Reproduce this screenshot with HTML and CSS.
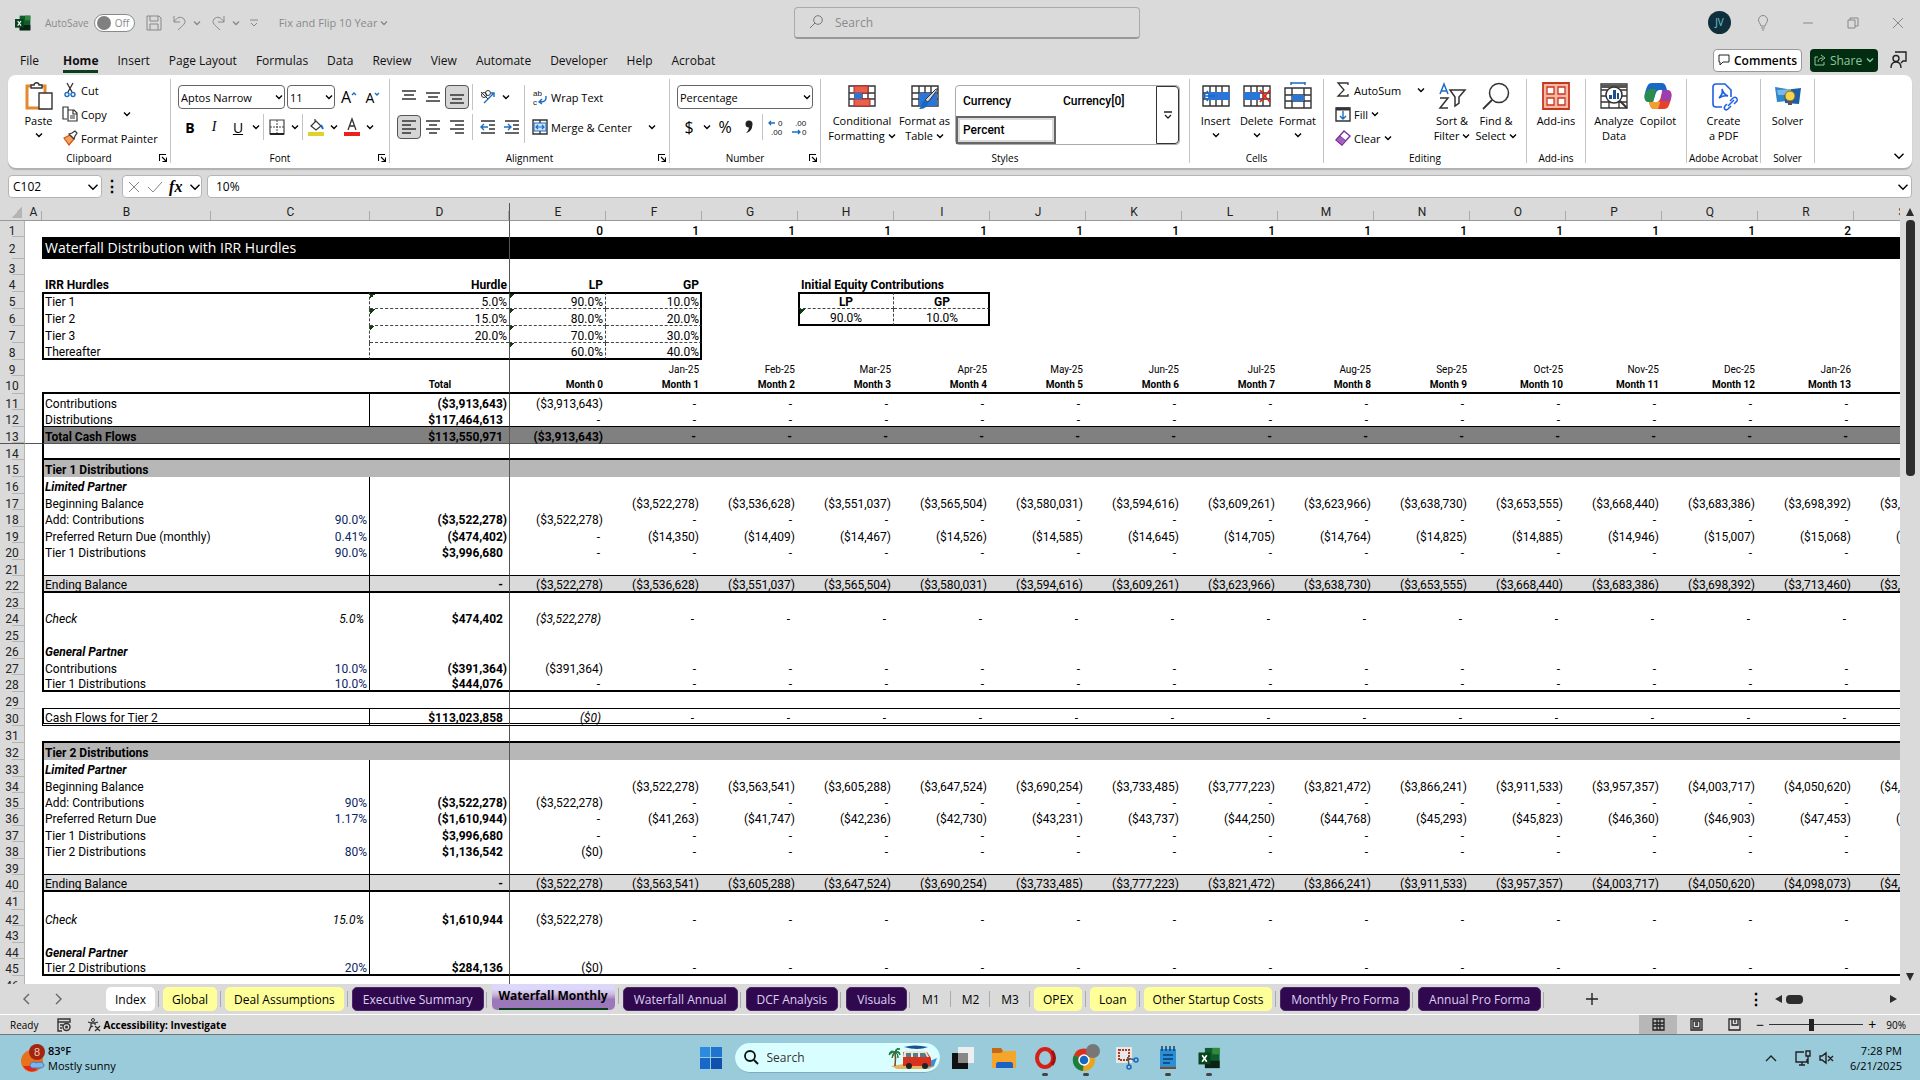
FILE: index.html
```html
<!DOCTYPE html>
<html lang="en">

<head>
  <meta charset="UTF-8" />
  <meta name="viewport" content="width=device-width, initial-scale=1.0" />
  <title>Fix and Flip 10 Year - Excel</title>
  <link rel="stylesheet" href="styles.css">
</head>

<body>
  <svg class="sprite" aria-hidden="true">
    <symbol id="chev" viewBox="0 0 8 8"><path d="M1 2.5l3 3 3-3" fill="none" stroke="currentColor" stroke-width="1.4" vector-effect="non-scaling-stroke" /></symbol>
    <symbol id="launch" viewBox="0 0 8 8"><path d="M.5 7V.5H7M3 3l4 4M7.5 3.5v4h-4" fill="none" stroke="currentColor" stroke-width="1.1" /></symbol>
    <symbol id="excel" viewBox="0 0 24 24">
      <path d="M7 1h16v22H7z" fill="#0f5c2c" /><path d="M15 1h8v7h-8z" fill="#2f8a3c" /><path d="M7 15h16v8H7z" fill="#0a2312" />
      <path d="M0 6h13v13H0z" fill="#07441d" /><path d="M4 9l5 7M9 9l-5 7" stroke="#fff" stroke-width="1.8" />
    </symbol>
    <symbol id="grid" viewBox="0 0 28 28"><path d="M1 4h26v20H1zM1 11h26M1 17h26M8 4v20M14 4v20M20 4v20" fill="#fff" stroke="#333" stroke-width="1.4" /></symbol>
  </svg>

  <header class="titlebar">
    <div class="title-left">
      <svg class="app-icon"><use href="#excel" /></svg>
      <label class="autosave" for="autosave">AutoSave</label>
      <span class="toggle"><input type="checkbox" id="autosave" /><span>Off</span></span>
      <button class="qat" aria-label="Save"><svg width="16" height="16" viewBox="0 0 16 16"><path d="M1 1h12l2 2v12H1zM4 1v5h8V1M4 15V9h8v6" /></svg></button>
      <button class="qat undo" aria-label="Undo"><svg width="15" height="16" viewBox="0 0 15 16"><path d="M2 1v6h6M2 7c3-5 7-6 10-3 3 4-1 6-6 11" /></svg><svg class="chev"><use href="#chev" /></svg></button>
      <button class="qat redo" aria-label="Redo"><svg width="15" height="16" viewBox="0 0 15 16"><path d="M13 1v6H7M13 7C10 2 6 1 3 4c-3 4 1 6 6 11" /></svg><svg class="chev"><use href="#chev" /></svg></button>
      <button class="qat more" aria-label="Customize"><svg width="8" height="8" viewBox="0 0 8 8"><path d="M0 1h8M1 4l3 3 3-3" /></svg></button>
      <button class="doc-name">Fix and Flip 10 Year <svg class="chev"><use href="#chev" /></svg></button>
    </div>
    <label class="search">
      <svg width="14" height="14" viewBox="0 0 14 14"><circle cx="9" cy="5" r="4.3" fill="none" stroke="#777" /><path d="M6 8L1 13" stroke="#777" /></svg>
      <input type="text" placeholder="Search" aria-label="Search" />
    </label>
    <div class="title-right">
      <span class="avatar">JV</span>
      <button aria-label="Tips"><svg width="12" height="16" viewBox="0 0 12 16"><path d="M4 11C3 8 1.500 7 1.500 5a4.500 4.500 0 0 1 9 0C10.500 7 9 8 8 11zM4 13h4M5 15h2" /></svg></button>
      <button aria-label="Minimize"><svg width="12" height="16" viewBox="0 0 12 16"><path d="M1 8h10" /></svg></button>
      <button aria-label="Restore"><svg width="12" height="16" viewBox="0 0 12 16"><path d="M1 5h7v8H1zM3 5V3h8v8H8" /></svg></button>
      <button aria-label="Close"><svg width="12" height="16" viewBox="0 0 12 16"><path d="M1 3l10 10M11 3L1 13" /></svg></button>
    </div>
  </header>

  <nav class="menu">
    <a href="#" class="file">File</a>
    <a href="#" class="active">Home</a>
    <a href="#">Insert</a>
    <a href="#">Page Layout</a>
    <a href="#">Formulas</a>
    <a href="#">Data</a>
    <a href="#">Review</a>
    <a href="#">View</a>
    <a href="#">Automate</a>
    <a href="#">Developer</a>
    <a href="#">Help</a>
    <a href="#">Acrobat</a>
    <span class="spacer"></span>
    <button class="comments"><svg width="12" height="12" viewBox="0 0 12 12"><path d="M1 1h10v7H5l-3 3V8H1z" fill="none" stroke="#222" /></svg>Comments</button>
    <button class="share"><svg width="12" height="12" viewBox="0 0 12 12"><path d="M4 3H1v8h9V8M4 8c0-3 2-4 5-4M7 1l4 3-4 3" fill="none" stroke="#8fc7a0" /></svg>Share<svg class="chev"><use href="#chev" /></svg></button>
    <button class="presence" aria-label="Catch up"><svg width="18" height="18" viewBox="0 0 18 18"><path d="M5 1h11v9h-3l-2 2M1 17c0-4 2-6 5-6s5 2 5 6" fill="none" stroke="#222" stroke-width="1.4" /><circle cx="6" cy="7.500" r="3" fill="#dadada" stroke="#222" stroke-width="1.4" /></svg></button>
  </nav>

  <section class="ribbon">
    <div class="group g-clipboard">
      <div class="group-body">
        <button class="big w40">
          <svg viewBox="0 0 28 28"><path d="M2 4h18v22H2z" fill="#fff" stroke="#e58a2c" stroke-width="3" /><path d="M6 6V3h3c0-3 5-3 5 0h3v3z" fill="#fff" stroke="#333" stroke-width="1.400" /><path d="M14 11h13v16H14z" fill="#fff" stroke="#333" stroke-width="1.400" /></svg>
          Paste<svg class="chev"><use href="#chev" /></svg>
        </button>
        <div class="stack">
          <button class="small"><svg viewBox="0 0 16 16"><path d="M5 1l5 9M11 1L6 10" stroke="#333" stroke-width="1.3" /><circle cx="5" cy="12.500" r="2" fill="none" stroke="#1b6ec2" stroke-width="1.4" /><circle cx="11" cy="12.500" r="2" fill="none" stroke="#1b6ec2" stroke-width="1.4" /></svg>Cut</button>
          <button class="small"><svg viewBox="0 0 16 16"><path d="M6 4V1H1v12h4M6 4h6l3 3v8H6zM11 4v4h4M8 10h5M8 12h5" fill="none" stroke="#333" stroke-width="1.2" /></svg>Copy<svg class="chev gap-left"><use href="#chev" /></svg></button>
          <button class="small"><svg viewBox="0 0 16 16"><path d="M2 8l6-3 4 4-5 6z" fill="#f3a25a" stroke="#d2521a" stroke-width="1.2" /><path d="M7 4l5 5 1-3 2-3-2-2-3 2z" fill="#fff" stroke="#333" stroke-width="1.2" /></svg>Format Painter</button>
        </div>
      </div>
      <div class="group-label"><span>Clipboard</span><svg class="launch"><use href="#launch" /></svg></div>
    </div>

    <div class="group g-font">
      <div class="tools">
        <div class="tool-row">
          <span class="select font-name"><select aria-label="Font"><option>Aptos Narrow</option></select><svg class="chev"><use href="#chev" /></svg></span>
          <span class="select font-size"><select aria-label="Font size"><option>11</option></select><svg class="chev"><use href="#chev" /></svg></span>
          <button class="tool letter big-a" aria-label="Grow font">A<svg class="mark" viewBox="0 0 6 12"><path d="M1 4l2-2 2 2" /></svg></button>
          <button class="tool letter" aria-label="Shrink font">A<svg class="mark" viewBox="0 0 6 12"><path d="M1 2l2 2 2-2" /></svg></button>
        </div>
        <div class="tool-row">
          <button class="tool letter"><b>B</b></button>
          <button class="tool letter serif"><i>I</i></button>
          <button class="tool letter"><u>U</u></button>
          <svg class="chev"><use href="#chev" /></svg>
          <span class="sep"></span>
          <button class="tool" aria-label="Borders"><svg viewBox="0 0 16 16"><path d="M1 1h14v14H1z" fill="none" stroke="#444" stroke-width="1.200" /><path d="M8 1v14M1 8h14" stroke="#444" stroke-dasharray="2 1" /><path d="M1 15h14" stroke="#222" stroke-width="2" /></svg></button>
          <svg class="chev"><use href="#chev" /></svg>
          <span class="sep"></span>
          <button class="tool" aria-label="Fill color"><svg viewBox="0 0 16 18"><path d="M7 1v3M3 8l5-5 5 5-5 4z" fill="#fff" stroke="#333" stroke-width="1.2" /><path d="M13 7l2 4" stroke="#1b6ec2" stroke-width="2" /><path d="M0 14h16v4H0z" fill="#ddd32a" /></svg></button>
          <svg class="chev"><use href="#chev" /></svg>
          <button class="tool" aria-label="Font color"><svg viewBox="0 0 16 18"><path d="M4 12l4-11 4 11M5 8h6" fill="none" stroke="#333" stroke-width="1.3" /><path d="M0 14h16v4H0z" fill="#e8231a" /></svg></button>
          <svg class="chev"><use href="#chev" /></svg>
        </div>
      </div>
      <div class="group-label"><span>Font</span><svg class="launch"><use href="#launch" /></svg></div>
    </div>

    <div class="group g-align">
      <div class="align-body">
        <div class="tools">
          <div class="tool-row">
            <button class="tool" aria-label="Top align"><svg viewBox="0 0 16 16"><path class="ln" d="M1 2h14M3 6h10M1 10h14" /></svg></button>
            <button class="tool" aria-label="Middle align"><svg viewBox="0 0 16 16"><path class="ln" d="M1 4h14M3 8h10M1 12h14" /></svg></button>
            <button class="tool on" aria-label="Bottom align"><svg viewBox="0 0 16 16"><path class="ln" d="M1 6h14M3 10h10M1 14h14" /></svg></button>
            <span class="sep"></span>
            <button class="tool" aria-label="Orientation"><svg viewBox="0 0 16 16"><circle cx="4" cy="6" r="2.500" fill="none" stroke="#333" /><circle cx="8" cy="4" r="2.500" fill="none" stroke="#333" /><path d="M4 14L14 4M14 8V4h-4" fill="none" stroke="#1b6ec2" stroke-width="1.400" /><path d="M1 3l7 7" stroke="#333" /></svg></button>
            <svg class="chev"><use href="#chev" /></svg>
          </div>
          <div class="tool-row">
            <button class="tool on" aria-label="Align left"><svg viewBox="0 0 16 16"><path class="ln" d="M1 2h14M1 6h9M1 10h14M1 14h9" /></svg></button>
            <button class="tool" aria-label="Center"><svg viewBox="0 0 16 16"><path class="ln" d="M1 2h14M4 6h8M1 10h14M4 14h8" /></svg></button>
            <button class="tool" aria-label="Align right"><svg viewBox="0 0 16 16"><path class="ln" d="M1 2h14M6 6h9M1 10h14M6 14h9" /></svg></button>
            <span class="sep"></span>
            <button class="tool" aria-label="Decrease indent"><svg viewBox="0 0 16 16"><path class="ln" d="M1 2h14M9 6h6M9 10h6M1 14h14" /><path d="M8 8H1M4 5L1 8l3 3" fill="none" stroke="#1b6ec2" stroke-width="1.400" /></svg></button>
            <button class="tool" aria-label="Increase indent"><svg viewBox="0 0 16 16"><path class="ln" d="M1 2h14M9 6h6M9 10h6M1 14h14" /><path d="M0 8h7M4 5l3 3-3 3" fill="none" stroke="#1b6ec2" stroke-width="1.400" /></svg></button>
          </div>
        </div>
        <span class="sep tall"></span>
        <div class="tools wrap-tools">
          <button class="small"><svg viewBox="0 0 16 16"><text x="1" y="7">ab</text><text x="1" y="16">c</text><path d="M14 7v2c0 3-3 4-6 4M10 10l-3 3 3 2" fill="none" stroke="#1b6ec2" stroke-width="1.400" /></svg>Wrap Text</button>
          <button class="small merge"><svg viewBox="0 0 16 16"><path d="M1 1h14v14H1zM8 1v3M8 12v3" fill="none" stroke="#333" stroke-width="1.400" /><path d="M2 4h12v8H2z" fill="#cfe2f7" stroke="#1b6ec2" /><path d="M4 8h8M6 6L4 8l2 2M10 6l2 2-2 2" fill="none" stroke="#1b6ec2" stroke-width="1.200" /></svg>Merge &amp; Center<svg class="chev gap-left"><use href="#chev" /></svg></button>
        </div>
      </div>
      <div class="group-label"><span>Alignment</span><svg class="launch"><use href="#launch" /></svg></div>
    </div>

    <div class="group g-number">
      <div class="tools">
        <div class="tool-row">
          <span class="select number-format"><select aria-label="Number format"><option>Percentage</option></select><svg class="chev"><use href="#chev" /></svg></span>
        </div>
        <div class="tool-row">
          <button class="tool letter sign">$</button>
          <svg class="chev"><use href="#chev" /></svg>
          <button class="tool letter sign">%</button>
          <button class="tool letter" aria-label="Comma style"><svg viewBox="0 0 16 16"><circle cx="8" cy="5" r="3.500" fill="#222" /><path d="M11 5c1 5-2 8-6 9 2-2 3-4 3-6z" fill="#222" /></svg></button>
          <span class="sep"></span>
          <button class="tool" aria-label="Increase decimal"><svg viewBox="0 0 16 16"><path d="M7 4H1M3 2L1 4l2 2" fill="none" stroke="#1b6ec2" stroke-width="1.3" /><text x="10" y="7">0</text><text x="3" y="16">.00</text></svg></button>
          <button class="tool" aria-label="Decrease decimal"><svg viewBox="0 0 16 16"><path d="M0 13h8M6 11l2 2-2 2" fill="none" stroke="#1b6ec2" stroke-width="1.3" /><text x="3" y="7">.00</text><text x="10" y="16">0</text></svg></button>
        </div>
      </div>
      <div class="group-label"><span>Number</span><svg class="launch"><use href="#launch" /></svg></div>
    </div>

    <div class="group g-styles">
      <div class="group-body">
        <button class="big w64">
          <svg viewBox="0 0 28 28"><use href="#grid" /><path d="M6 4h14v7H6zM6 17h16v7H6z" fill="#e9604f" stroke="#b52a1c" /><path d="M6 11h8v6H6z" fill="#2b74d8" /></svg>
          Conditional<span>Formatting <svg class="chev"><use href="#chev" /></svg></span>
        </button>
        <button class="big w60">
          <svg viewBox="0 0 28 28"><use href="#grid" /><path d="M8 11h18v13H8z" fill="#2b74d8" /><path d="M27 7L17 20l-3-2L25 7z" fill="#cfd8e3" stroke="#333" /><path d="M14 18l3 3c-1 5-5 6-9 6 3-2 2-7 6-9z" fill="#1767c4" /></svg>
          Format as<span>Table <svg class="chev"><use href="#chev" /></svg></span>
        </button>
        <div class="gallery">
          <div class="gallery-list">
            <button>Currency</button>
            <button>Currency[0]</button>
            <button class="picked">Percent</button>
          </div>
          <button class="gallery-more" aria-label="More styles"><svg width="8" height="8" viewBox="0 0 8 8"><path d="M0 1h8M1 4l3 3 3-3" fill="none" stroke="#222" stroke-width="1.300" /></svg></button>
        </div>
      </div>
      <div class="group-label"><span>Styles</span></div>
    </div>

    <div class="group g-cells">
      <div class="group-body">
        <button class="big w40"><svg viewBox="0 0 28 28"><use href="#grid" /><path d="M6 10h22v8H6z" fill="#2b74d8" /><path d="M13 14H1M6 9l-5 5 5 5" fill="none" stroke="#1767c4" stroke-width="1.600" /></svg>Insert<svg class="chev"><use href="#chev" /></svg></button>
        <button class="big w40"><svg viewBox="0 0 28 28"><use href="#grid" /><path d="M1 10h16v8H1z" fill="#2b74d8" /><path d="M17 8l10 12M27 8L17 20" stroke="#e8231a" stroke-width="1.800" /></svg>Delete<svg class="chev"><use href="#chev" /></svg></button>
        <button class="big w40"><svg viewBox="0 0 28 28"><path d="M1 6h26v20H1zM1 13h26M1 19h26M8 6v20M20 6v20" fill="#fff" stroke="#333" stroke-width="1.400" /><path d="M8 13h12v6H8z" fill="#2b74d8" /><path d="M7 1h14M7 0v3M21 0v3" stroke="#1767c4" stroke-width="1.400" /></svg>Format<svg class="chev"><use href="#chev" /></svg></button>
      </div>
      <div class="group-label"><span>Cells</span></div>
    </div>

    <div class="group g-editing">
      <div class="group-body">
        <div class="stack">
          <button class="small"><svg viewBox="0 0 16 16"><path d="M13 3V1H3l6 7-6 6h10v-2" fill="none" stroke="#333" stroke-width="1.300" /></svg>AutoSum<svg class="chev gap-left"><use href="#chev" /></svg></button>
          <button class="small"><svg viewBox="0 0 16 16"><path d="M1 2h14v13H1z" fill="#fff" stroke="#333" stroke-width="1.400" /><path d="M1 3h14" stroke="#333" stroke-width="3" /><path d="M8 5v8M5 10l3 3 3-3" fill="none" stroke="#1b6ec2" stroke-width="1.400" /></svg>Fill<svg class="chev"><use href="#chev" /></svg></button>
          <button class="small"><svg viewBox="0 0 16 16"><path d="M1 10L9 1l6 5-8 9z" fill="#fff" stroke="#7b2f9a" stroke-width="1.400" /><path d="M1 10l4-4 6 5-4 4z" fill="#a45fc0" stroke="#7b2f9a" /></svg>Clear<svg class="chev"><use href="#chev" /></svg></button>
        </div>
        <button class="big w44"><svg viewBox="0 0 28 28"><path d="M2 12L6 2l4 10M3 9h6" fill="none" stroke="#1b6ec2" stroke-width="1.500" /><path d="M2 16h8L2 26h8" fill="none" stroke="#333" stroke-width="1.500" /><path d="M12 8h15l-6 7v6l-4 3v-9z" fill="none" stroke="#333" stroke-width="1.500" /></svg>Sort &amp;<span>Filter <svg class="chev"><use href="#chev" /></svg></span></button>
        <button class="big w44"><svg viewBox="0 0 28 28"><circle cx="17" cy="11" r="9.500" fill="none" stroke="#333" stroke-width="1.500" /><path d="M10 18L1 27" stroke="#333" stroke-width="1.800" /></svg>Find &amp;<span>Select <svg class="chev"><use href="#chev" /></svg></span></button>
      </div>
      <div class="group-label"><span>Editing</span></div>
    </div>

    <div class="group g-addins">
      <div class="group-body center">
        <button class="big w44"><svg viewBox="0 0 28 28"><path d="M1 1h26v26H1z" fill="#f7b7a6" stroke="#c8361c" stroke-width="1.800" /><path d="M5 5h7v7H5zM16 5h7v7h-7zM5 16h7v7H5zM16 16h7v7h-7z" fill="#fff" stroke="#c8361c" stroke-width="1.300" /></svg>Add-ins</button>
      </div>
      <div class="group-label"><span>Add-ins</span></div>
    </div>

    <div class="group g-analyze">
      <div class="group-body center">
        <button class="big w44"><svg viewBox="0 0 28 28"><path d="M1 2h26v24H1zM1 8h26M1 14h26M1 20h26M9 8v18M19 8v18" fill="#fff" stroke="#333" stroke-width="1.300" /><path d="M1 3h26v3H1z" fill="#555" /><circle cx="14" cy="13" r="8" fill="#fff" stroke="#333" stroke-width="1.500" /><path d="M9 13h3v4H9zM13 8h3v9h-3zM17 11h2v6h-2z" fill="#1d4f8c" /><path d="M20 19l7 7" stroke="#333" stroke-width="2" /></svg>Analyze<span>Data</span></button>
        <button class="big w44"><svg viewBox="0 0 28 28"><path d="M8 1h10c3 0 4 3 5 7h-7c-3 0-4 2-5 6l-2 6H5c-5 0-5-5-4-9 2-7 3-10 7-10z" fill="#1767c4" /><path d="M1 12c1-3 3-5 6-5h5l-3 13H5c-4 0-5-4-4-8z" fill="#2c8a4a" /><path d="M20 27H10c-3 0-4-3-5-7h7c3 0 4-2 5-6l2-6h4c5 0 5 5 4 9-2 7-3 10-7 10z" fill="#e8402a" /><path d="M18 8h5c4 0 5 4 4 8l-1 3h-9z" fill="#9b3fb0" /><path d="M5 20h7c3 0 4-1 4 1l-2 6h-4c-3 0-4-3-5-7z" fill="#f0a030" /></svg>Copilot</button>
      </div>
      <div class="group-label"></div>
    </div>

    <div class="group g-adobe">
      <div class="group-body center">
        <button class="big w44"><svg viewBox="0 0 28 28"><path d="M12 25H6c-2 0-3-1-3-3V5c0-2 1-3 3-3h9l6 6v7M9 16c3-3 4-6 3-9 1 4 3 6 6 7-4-1-6 0-9 2z" fill="none" stroke="#1f5fe0" stroke-width="1.600" /><path d="M17 22l-2 2c-2 3 1 5 3 3l3-3M20 19l3-3c3-2 5 1 4 3l-3 3M18 24l6-6" fill="none" stroke="#1f5fe0" stroke-width="1.500" /></svg>Create<span>a PDF</span></button>
      </div>
      <div class="group-label"><span>Adobe Acrobat</span></div>
    </div>

    <div class="group g-solver">
      <div class="group-body center">
        <button class="big w44"><svg viewBox="0 0 28 28"><path d="M1 5l12 2v12l-10 1z" fill="#2f86c8" /><path d="M10 8l17-2-2 16-14-1z" fill="#1a5fa8" /><path d="M3 8l14-1v6H4z" fill="#79b8e6" /><circle cx="16" cy="14" r="5" fill="#f6d451" stroke="#8a6a10" /><path d="M14 19h4v4h-4z" fill="#555" /></svg>Solver</button>
      </div>
      <div class="group-label"><span>Solver</span></div>
    </div>
    <button class="collapse" aria-label="Collapse ribbon"><svg width="12" height="12"><use href="#chev" /></svg></button>
  </section>

  <section class="formula-bar">
    <label class="name-box"><input type="text" value="C102" aria-label="Name box" /><svg class="chev lg"><use href="#chev" /></svg></label>
    <span class="dots">⋮</span>
    <div class="fx">
      <button aria-label="Cancel"><svg width="12" height="12" viewBox="0 0 12 12"><path d="M1 1l10 10M11 1L1 11" fill="none" stroke="#888" /></svg></button>
      <button aria-label="Enter"><svg width="16" height="12" viewBox="0 0 16 12"><path d="M1 6l5 5L15 1" fill="none" stroke="#888" /></svg></button>
      <button class="fx-btn"><i>fx</i></button>
      <svg class="chev lg"><use href="#chev" /></svg>
    </div>
    <label class="formula"><input type="text" value="10%" aria-label="Formula" /><svg class="chev lg"><use href="#chev" /></svg></label>
  </section>

  <main class="sheet">
    <div class="grid-wrap">
      <table class="grid" id="grid-table"></table>
    </div>
    <div class="vscroll">
      <span class="arrow up"></span>
      <span class="thumb"></span>
      <span class="arrow down"></span>
    </div>
  </main>

  <div class="tabs">
    <button class="nav-arrow" aria-label="Previous sheet"><svg width="8" height="12" viewBox="0 0 8 12"><path d="M6 1L1 6l5 5" /></svg></button>
    <button class="nav-arrow" aria-label="Next sheet"><svg width="8" height="12" viewBox="0 0 8 12"><path d="M2 1l5 5-5 5" /></svg></button>
    <div class="tab-list">
      <button class="tab white">Index</button>
      <button class="tab yellow">Global</button>
      <button class="tab yellow">Deal Assumptions</button>
      <button class="tab purple">Executive Summary</button>
      <button class="tab current"><span>Waterfall Monthly</span></button>
      <button class="tab purple">Waterfall Annual</button>
      <button class="tab purple">DCF Analysis</button>
      <button class="tab purple">Visuals</button>
      <button class="tab plain">M1</button>
      <button class="tab plain">M2</button>
      <button class="tab plain">M3</button>
      <button class="tab yellow">OPEX</button>
      <button class="tab yellow">Loan</button>
      <button class="tab yellow">Other Startup Costs</button>
      <button class="tab purple">Monthly Pro Forma</button>
      <button class="tab purple">Annual Pro Forma</button>
    </div>
    <button class="add-sheet" aria-label="New sheet"><svg width="12" height="12" viewBox="0 0 12 12"><path d="M6 0v12M0 6h12" stroke="#222" stroke-width="1.400" /></svg></button>
    <div class="hscroll">
      <span class="dots">⋮</span>
      <span class="arrow left"></span>
      <span class="thumb"></span>
      <span class="arrow right"></span>
    </div>
  </div>

  <footer class="status">
    <span>Ready</span>
    <svg width="14" height="14" viewBox="0 0 14 14"><path d="M1 1h12v3H1zM1 4v9h4M3 7h3M3 10h2" fill="none" stroke="#333" stroke-width="1.400" /><circle cx="9.500" cy="9" r="3.500" fill="#dadada" stroke="#333" stroke-width="1.400" /><circle cx="9.500" cy="9" r="1.500" fill="#333" /></svg>
    <svg class="a11y" width="14" height="14" viewBox="0 0 14 14"><circle cx="6" cy="2" r="1.500" fill="none" stroke="#333" /><path d="M1 4l3 1v3l-2 5M11 4L8 5v2M4 5h4M4 9l2-1M8 8l5 5M13 8l-5 5" fill="none" stroke="#333" stroke-width="1.300" /></svg>
    <b>Accessibility: Investigate</b>
    <span class="spacer"></span>
    <button class="view on" aria-label="Normal"><svg width="13" height="13" viewBox="0 0 13 13"><path d="M1 1h11v11H1zM1 5h11M1 8h11M5 1v11M8 1v11" /></svg></button>
    <button class="view" aria-label="Page layout"><svg width="13" height="13" viewBox="0 0 13 13"><path d="M1 1h11v11H1zM3 3h7v7H3zM5 5h3M5 7h3" /></svg></button>
    <button class="view" aria-label="Page break"><svg width="13" height="13" viewBox="0 0 13 13"><path d="M1 1h11v11H1zM4 1v6h6V1M7 1v4" /></svg></button>
    <label class="zoom"><span>−</span><input type="range" min="10" max="190" value="90" aria-label="Zoom" /><span>+</span></label>
    <span class="percent">90%</span>
  </footer>

  <div class="taskbar">
    <button class="weather">
      <svg width="26" height="28" viewBox="0 0 26 28"><circle cx="12" cy="17" r="11" fill="#e8721c" /><path d="M3 22a10 10 0 0 0 14 4l-2-4z" fill="#e8231a" /><path d="M10 22c0-4 4-5 6-3 4-2 8 0 8 2s-2 3-4 3h-8z" fill="#7db4ea" stroke="#3f78c0" /><circle cx="17" cy="8" r="8" fill="#a3240f" /><text class="badge" x="14" y="12">8</text></svg>
      <span><b>83°F</b><br>Mostly sunny</span>
    </button>
    <div class="task-center">
      <button class="task" aria-label="Start"><svg width="22" height="22" viewBox="0 0 22 22"><path d="M0 0h10v10H0z" fill="#2b8be0" /><path d="M11 0h11v10H11z" fill="#1f74d0" /><path d="M0 11h10v11H0z" fill="#1768c8" /><path d="M11 11h11v11H11z" fill="#0f4fae" /></svg></button>
      <label class="task-search">
        <svg width="16" height="16" viewBox="0 0 16 16"><circle cx="7" cy="7" r="5" fill="none" stroke="#111" stroke-width="1.800" /><path d="M11 11l4 4" stroke="#111" stroke-width="2" /></svg>
        <input type="text" placeholder="Search" aria-label="Search taskbar" />
        <svg width="48" height="24" viewBox="0 0 48 24"><path d="M2 21q22-5 44 0l-6 3H8z" fill="#e6b45c" /><path d="M36 18l12-5-3 8-8 2z" fill="#3f8fd0" /><path d="M6 21q1-8 0-14" stroke="#7a4a20" stroke-width="1.600" fill="none" /><path d="M6 7q-5-3-6 3 3-3 6-3-3 2-3 6 2-4 3-6 3 2 3 6 1-4-3-6 4 0 5 3 0-5-5-3 2-3 5-3-4-2-5 3z" fill="#1f7a3c" stroke="#1f7a3c" /><path d="M14 7h24l4 6v8H14z" fill="#d8321f" /><path d="M15 6h22l3 6H14z" fill="#f3e3d0" /><path d="M17 8h5v4h-5zM24 8h5v4h-5zM31 8h5l2 4h-7z" fill="#4f7d90" /><path d="M15 2q10-3 24 0-10 4-24 0z" fill="#1c4f94" /><circle cx="20" cy="21" r="3" fill="#222" /><circle cx="36" cy="21" r="3" fill="#222" /></svg>
      </label>
      <button class="task" aria-label="Task view"><svg width="22" height="22" viewBox="0 0 22 22"><path d="M0 6h16v16H0z" fill="#111" /><path d="M6 0h16v16H6z" fill="#eee" /><path d="M6 6h10v10H6z" fill="#888" /></svg></button>
      <button class="task" aria-label="File Explorer"><svg width="24" height="22" viewBox="0 0 24 22"><path d="M0 1h9l2 3h13v17H0z" fill="#f5a52a" /><path d="M0 1h9l2 3-2 2H0z" fill="#c06a1a" /><path d="M4 21v-4c0-1 1-2 2-2h13c1 0 2 1 2 2v4z" fill="#1b62c4" /></svg></button>
      <button class="task open" aria-label="Opera"><svg width="22" height="22" viewBox="0 0 22 22"><ellipse cx="11" cy="11" rx="8" ry="9" fill="none" stroke="#d81f16" stroke-width="4" /><path d="M18 4q5 7 0 14" fill="none" stroke="#9c120c" stroke-width="3" /></svg></button>
      <button class="task open" aria-label="Chrome"><svg width="28" height="28" viewBox="0 0 28 28"><circle cx="12" cy="16" r="11" fill="#e8a51c" /><path d="M12 16L2 11A11 11 0 0 1 22 11z" fill="#d9301f" /><path d="M12 16L2 11a11 11 0 0 0 9 16z" fill="#1d7d3c" /><circle cx="12" cy="16" r="5" fill="#1767c4" stroke="#fff" stroke-width="1.500" /><circle cx="21" cy="7" r="7" fill="#777" /></svg></button>
      <button class="task" aria-label="Snipping Tool"><svg width="24" height="24" viewBox="0 0 24 24"><path d="M1 1h16v16H1z" fill="#e8e8ea" /><path d="M4 4h10v10H4z" fill="none" stroke="#b03a1a" stroke-width="2" stroke-dasharray="2 1" /><path d="M12 12l8 2M13 11l1 9" stroke="#555" stroke-width="1.500" /><circle cx="21" cy="14" r="2" fill="none" stroke="#1767c4" stroke-width="1.500" /><circle cx="14" cy="21" r="2" fill="none" stroke="#1767c4" stroke-width="1.500" /></svg></button>
      <button class="task open" aria-label="Notepad"><svg width="18" height="24" viewBox="0 0 18 24"><path d="M1 3h16v18H1z" fill="#2b8fd8" /><path d="M1 21h16v2H1z" fill="#7a4a2a" /><path d="M3 0v5M7 0v5M11 0v5M15 0v5" stroke="#1a3f6a" stroke-width="1.500" /><path d="M4 9h10M4 13h10M4 17h7" stroke="#0d3c70" stroke-width="1.500" /></svg></button>
      <button class="task open" aria-label="Excel"><svg width="23" height="22"><use href="#excel" /></svg></button>
    </div>
    <div class="tray">
      <svg width="12" height="8" viewBox="0 0 12 8"><path d="M1 7l5-5 5 5" /></svg>
      <svg class="net" width="16" height="16" viewBox="0 0 16 16"><path d="M9 2H1v10h11V9M4 15h6M7 12v3M11 1h4v5h-4zM13 6v8" /></svg>
      <svg width="15" height="12" viewBox="0 0 15 12"><path d="M1 4h2l4-3v10L3 8H1zM9 4l5 5M14 4L9 9" /></svg>
      <span class="clock">7:28 PM<br>6/21/2025</span>
    </div>
  </div>

  <script src="script.js"></script>
</body>

</html>
```
FILE: styles.css
```css
html,
body {
  margin: 0;
  padding: 0;
  height: 100%;
}

body {
  font-family: "Open Sans", "Noto Sans", sans-serif;
  font-size: 12px;
  color: #000;
  background: #dadada;
  display: flex;
  flex-direction: column;
  overflow: hidden;
}

* {
  box-sizing: border-box;
}

button,
input,
select {
  font: inherit;
  color: inherit;
  background: none;
  border: none;
  padding: 0;
  margin: 0;
  white-space: nowrap;
}

svg {
  overflow: visible;
}

svg text {
  font-family: "Liberation Sans", sans-serif;
  font-size: 8px;
  fill: #111;
}

svg .badge {
  font-size: 11px;
  fill: #f3c7b8;
}

.sprite {
  display: none;
}

.chev {
  width: 8px;
  height: 8px;
  flex: none;
}

.chev.lg {
  width: 12px;
  height: 12px;
}

.spacer {
  flex: 1;
}

/* title bar */
.titlebar {
  flex: none;
  height: 45px;
  display: grid;
  grid-template-columns: 1fr 346px 1fr;
  align-items: center;
  color: #8a8a8a;
}

.title-left {
  display: flex;
  align-items: center;
  padding-left: 15px;
}

.title-left svg,
.title-right svg {
  fill: none;
  stroke: #888;
}

.title-left .chev,
.title-left .app-icon {
  stroke: none;
}

.app-icon {
  width: 16px;
  height: 16px;
}

.autosave {
  font-size: 10px;
  margin: 0 5px 0 14px;
}

.toggle {
  display: flex;
  align-items: center;
  gap: 4px;
  width: 41px;
  height: 18px;
  padding: 0 2px;
  margin-right: 11px;
  background: #fff;
  border: 1px solid #8a8a8a;
  border-radius: 9px;
  font-size: 10px;
}

.toggle input {
  appearance: none;
  width: 14px;
  height: 14px;
  border-radius: 50%;
  background: #808080;
}

.qat {
  display: flex;
  align-items: center;
  gap: 6px;
  margin-right: 10px;
}

.qat.more {
  margin-right: 21px;
}

.doc-name {
  font-size: 11px;
}

.search {
  height: 32px;
  display: flex;
  align-items: center;
  gap: 12px;
  padding: 0 14px;
  margin-left: 7px;
  margin-right: -7px;
  border: 1px solid #aaa;
  border-bottom: 2px solid #999;
  border-radius: 4px;
}

.search input {
  flex: 1;
}

.search input::placeholder {
  color: #8a8a8a;
}

.title-right {
  display: flex;
  justify-content: flex-end;
  align-items: center;
  gap: 33px;
  padding-right: 16px;
}

.title-right button {
  display: flex;
}

.avatar {
  width: 23px;
  height: 23px;
  margin-right: -7px;
  border-radius: 50%;
  background: #0f2f3c;
  color: #6fc3cf;
  font-size: 10px;
  line-height: 23px;
  text-align: center;
}

/* menu */
.menu {
  flex: none;
  height: 30px;
  display: flex;
  align-items: center;
  gap: 19px;
  padding: 0 12px 0 20px;
}

.menu a {
  color: #111;
  text-decoration: none;
  line-height: 20px;
  padding-top: 4px;
  height: 26px;
}

.menu .file {
  margin-right: 5px;
}

.menu .active {
  font-weight: bold;
  border-bottom: 3px solid #0b3d1c;
}

.menu button {
  display: flex;
  align-items: center;
  justify-content: center;
  gap: 4px;
  height: 23px;
}

.menu .comments {
  width: 89px;
  margin-right: -11px;
  background: #fff;
  border: 1px solid #999;
  border-radius: 4px;
  font-weight: 600;
}

.menu .share {
  width: 68px;
  margin-right: -7px;
  background: #032d10;
  color: #8fc7a0;
  border-radius: 4px;
}

/* ribbon */
.ribbon {
  flex: none;
  display: flex;
  height: 93px;
  margin: 0 8px;
  background: #fff;
  border-radius: 8px;
  box-shadow: 0 2px 1px #b0b0b0;
  font-size: 11px;
}

.group {
  flex: none;
  display: flex;
  flex-direction: column;
  margin: 4px 0 5px;
  border-right: 1px solid #c4c4c4;
}

.group-body {
  flex: 1;
  display: flex;
}

.group-body.center {
  justify-content: center;
}

.group-label {
  display: grid;
  grid-template-columns: 1fr auto 1fr;
  line-height: 10px;
  min-height: 10px;
  padding: 0 3px;
  font-size: 10px;
}

.group-label span {
  grid-column: 2;
}

.launch {
  width: 8px;
  height: 8px;
  margin-top: 1px;
  justify-self: end;
}

.g-clipboard { width: 163px; }
.g-font { width: 219px; }
.g-align { width: 280px; }
.g-number { width: 151px; }
.g-styles { width: 369px; }
.g-cells { width: 134px; }
.g-editing { width: 203px; }
.g-addins { width: 59px; }
.g-analyze { width: 101px; }
.g-adobe { width: 74px; }
.g-solver { width: 54px; }

.g-clipboard .group-body { padding-left: 10px; }
.g-styles .group-body { padding-left: 9px; }
.g-cells .group-body { padding-left: 5px; }
.g-editing .group-body { padding-left: 11px; }

.g-adobe .group-label,
.g-solver .group-label,
.g-addins .group-label {
  padding: 0;
}

.big {
  flex: none;
  display: flex;
  flex-direction: column;
  align-items: center;
  padding-top: 3px;
  line-height: 15px;
}

.big > svg:first-child {
  width: 28px;
  height: 28px;
  margin-bottom: 3px;
}

.big > .chev {
  margin-top: 3px;
}

.w40 { width: 41px; }
.w44 { width: 44px; }
.w60 { width: 61px; }
.w64 { width: 64px; }

.stack {
  display: flex;
  flex-direction: column;
  margin-top: -1px;
}

.g-clipboard .stack {
  margin-left: 3px;
}

.g-editing .stack {
  width: 95px;
}

.small {
  display: flex;
  align-items: center;
  gap: 3px;
  height: 24px;
}

.small > svg:first-child {
  width: 16px;
  height: 16px;
}

.gap-left {
  margin-left: 13px;
}

.tools {
  flex: 1;
  display: flex;
  flex-direction: column;
  gap: 6px;
  padding: 6px 0 0 7px;
}

.tool-row {
  display: flex;
  align-items: center;
  height: 24px;
}

.tool {
  width: 24px;
  height: 24px;
  display: flex;
  align-items: center;
  justify-content: center;
}

.tool svg {
  width: 16px;
  height: 18px;
}

.tool.on {
  background: #d6d6d6;
  border: 1px solid #555;
  border-radius: 4px;
}

.tool-row > .chev {
  margin: 0 2px;
}

.letter {
  font-size: 14px;
}

.letter.serif {
  font-family: "Liberation Serif", serif;
}

.letter.sign,
.big-a {
  font-size: 16px;
}

.tool .mark {
  width: 6px;
  height: 12px;
  fill: none;
  stroke: #1b6ec2;
  stroke-width: 1.4;
}

.ln {
  fill: none;
  stroke: #333;
  stroke-width: 1.5;
}

.sep {
  width: 1px;
  height: 26px;
  margin: 0 3px;
  background: #c4c4c4;
}

.g-font .sep,
.g-number .sep {
  margin: 0 1px;
}

.sep.tall {
  height: 58px;
  margin: 6px 0 0;
}

.select {
  position: relative;
  display: flex;
  height: 24px;
  margin-right: 2px;
}

.select select {
  appearance: none;
  width: 100%;
  padding: 0 2px;
  border: 1px solid #666;
  border-radius: 4px;
}

.select .chev {
  position: absolute;
  right: 2px;
  top: 8px;
}

.font-name { width: 107px; }
.font-size { width: 48px; }
.number-format { width: 136px; }

.align-body {
  flex: 1;
  display: flex;
}

.align-body .tools {
  flex: none;
  width: 134px;
}

.align-body .wrap-tools {
  width: auto;
}

.gallery {
  width: 225px;
  height: 60px;
  margin-top: 6px;
  display: flex;
  border: 1px solid #aaa;
  border-radius: 4px;
  font-family: Roboto, sans-serif;
  font-size: 12px;
  font-weight: 500;
}

.gallery-list {
  flex: 1;
  display: grid;
  grid-template-columns: 100px 1fr;
  grid-template-rows: 30px 28px;
}

.gallery-list button {
  text-align: left;
  padding-left: 7px;
}

.gallery-list .picked {
  padding-left: 5px;
  border: 2px solid #666;
  box-shadow: inset 0 0 0 2px #dadada;
}

.gallery-more {
  width: 23px;
  border: 1px solid #333;
  border-radius: 0 4px 4px 0;
}

.collapse {
  margin: auto 7px 6px auto;
  height: 12px;
}

/* formula bar */
.formula-bar {
  flex: none;
  height: 35px;
  padding: 7px 8px 5px;
  display: flex;
}

.name-box,
.fx,
.formula {
  display: flex;
  align-items: center;
  background: #fff;
  border: 1px solid #b4b4b4;
  border-radius: 4px;
}

.name-box {
  width: 94px;
  padding: 0 3px 0 4px;
}

.name-box input {
  width: 74px;
}

.dots {
  width: 20px;
  font-size: 16px;
  line-height: 22px;
  font-weight: bold;
  text-align: center;
}

.fx {
  width: 80px;
  justify-content: space-between;
  padding: 0 0 0 5px;
}

.fx button {
  display: flex;
}

.fx-btn {
  font-family: "Liberation Serif", serif;
  font-size: 16px;
  font-weight: bold;
}

.formula {
  flex: 1;
  margin-left: 5px;
  padding: 0 2px 0 8px;
}

.formula input {
  flex: 1;
}

/* sheet */
.sheet {
  flex: 1;
  min-height: 0;
  display: flex;
}

.grid-wrap {
  flex: 1;
  min-width: 0;
  overflow: hidden;
  background: #fff;
}

.grid {
  width: 1950px;
  table-layout: fixed;
  border-collapse: separate;
  border-spacing: 0;
  font-family: Roboto, sans-serif;
  font-size: 12px;
}

.grid th,
.grid td {
  height: 17px;
  padding: 6px 3px 0 3px;
  line-height: 8px;
  vertical-align: top;
  text-align: right;
  white-space: nowrap;
  font-weight: normal;
}

.grid .short > * { height: 16px; }
.grid .tall > * { height: 18px; }
.grid .banner > * { height: 22px; }

.grid th {
  text-align: center;
  color: #222;
  padding-left: 0;
  padding-right: 0;
  background: linear-gradient(#b4b4b4, #b4b4b4) right bottom / 12px 1px no-repeat #dadada;
  border-right: 1px solid #b4b4b4;
}

.grid thead th {
  padding-top: 5px;
  background: linear-gradient(#aaa, #aaa) right bottom / 1px 9px no-repeat #dadada;
  border-right: none;
  border-bottom: 1px solid #999;
}

.grid thead th.corner {
  background: linear-gradient(to bottom right, transparent 50%, #b4b4b4 50%) 12px 3px / 10px 12px no-repeat #dadada;
}

.grid .label { text-align: left; }
.grid .mid { text-align: center; }
.grid .total { padding-right: 2px; }
.grid .pos { padding-right: 6px; }
.grid .col-c { padding-right: 2px; color: #0b1f66; }
.grid .freeze { border-left: 1px solid #555; }

.grid .bold td,
.grid .b { font-weight: bold; }
.grid .index td { font-weight: 500; }

.grid .i {
  font-style: italic;
  color: #000;
  padding-right: 5px;
}

.grid .i.pos { padding-right: 8px; }
.grid .i.label { padding-right: 0; }

.grid .banner td.band {
  background: #000;
  color: #fff;
  font-family: "Open Sans", sans-serif;
  font-size: 14px;
  padding-top: 7px;
}

.grid .banner th { padding-top: 8px; }

.grid .small-text td { font-size: 10px; }
.grid .dark td.band { background: #808080; }
.grid .gray td.band { background: #b7b7b7; }
.grid .light td.band { background: #dadada; }

.grid .line1 td.band { border-bottom: 1px solid #000; }

.grid .line2 td.band {
  border-bottom: 2px solid #000;
  padding-top: 5px;
}

.grid .line3 td.band {
  border-bottom: 3px double #000;
  padding-top: 5px;
}

.grid .frozen > * { border-bottom: 1px solid #555; }

.grid .edge {
  border-left: 2px solid #000;
  padding-left: 1px;
}

.grid .rule { border-right: 1px solid #000; }

/* small boxed tables at the top */
.grid .bt { border-top: 2px solid #000; padding-top: 4px; }
.grid .bb { border-bottom: 2px solid #000; padding-top: 5px; }
.grid .br { border-right: 2px solid #000; padding-right: 1px; }
.grid .db { border-bottom: 1px dashed #444; }
.grid .dr { border-right: 1px dashed #444; padding-right: 2px; }

.grid .flag {
  background: linear-gradient(to bottom right, #0b3d14 50%, transparent 50%) left top / 5px 5px no-repeat;
}

.vscroll {
  flex: none;
  width: 20px;
  display: flex;
  flex-direction: column;
  align-items: center;
  padding: 5px 0 3px;
}

.vscroll .thumb {
  width: 9px;
  height: 256px;
  margin: 4px 0 auto;
  border-radius: 4px;
  background: #2d2d2d;
}

.arrow {
  width: 0;
  height: 0;
  border: 4px solid transparent;
}

.arrow.up { border-bottom: 8px solid #2d2d2d; border-top: none; }
.arrow.down { border-top: 8px solid #2d2d2d; border-bottom: none; }
.arrow.left { border-right: 7px solid #2d2d2d; border-left: none; }
.arrow.right { border-left: 7px solid #2d2d2d; border-right: none; }

/* sheet tabs */
.tabs {
  flex: none;
  height: 31px;
  display: flex;
  align-items: center;
  border-bottom: 1px solid #fff;
}

.nav-arrow {
  width: 8px;
  margin-left: 23px;
  display: flex;
}

.nav-arrow svg {
  fill: none;
  stroke: #666;
  stroke-width: 1.4;
}

.tab-list {
  display: flex;
  gap: 8px;
  height: 30px;
  margin-left: 44px;
}

.tab {
  position: relative;
  height: 24px;
  margin-top: 3px;
  padding: 1px 9px 0;
  border-radius: 5px;
}

.tab::after {
  content: "";
  position: absolute;
  right: -4px;
  top: 4px;
  width: 1px;
  height: 16px;
  background: #aaa;
}

.tab.plain { padding: 1px 7px 0; }
.tab.white { background: #fff; }
.tab.yellow { background: #ffff99; }

.tab.purple {
  padding: 1px 10px 0;
  background: #30084e;
  border: 1px solid #4b2a6b;
  color: #ddd0f0;
}

.tab.current {
  height: 26px;
  margin-top: 0;
  padding: 0 7px;
  font-weight: bold;
  background: linear-gradient(#dcd8fb 20%, #cbb8dc 40%, #9a78ba 60%);
  border-radius: 0 0 5px 5px;
}

.tab.current span {
  display: block;
  line-height: 24px;
  border-bottom: 2px solid #0b3d1c;
}

.add-sheet {
  display: flex;
  margin-left: 45px;
}

.hscroll {
  margin-left: auto;
  margin-right: 23px;
  display: flex;
  align-items: center;
}

.hscroll .dots {
  margin-right: 9px;
}

.hscroll .thumb {
  width: 17px;
  height: 9px;
  margin: 0 87px 0 4px;
  border-radius: 4px;
  background: #2d2d2d;
}

/* status bar */
.status {
  flex: none;
  height: 20px;
  display: flex;
  align-items: center;
  padding: 0 14px 0 10px;
  font-size: 10px;
  border-bottom: 1px solid #777;
}

.status > svg {
  margin-left: 19px;
}

.status .a11y {
  margin: 0 2px 0 16px;
}

.view {
  width: 38px;
  height: 19px;
  display: flex;
  align-items: center;
  justify-content: center;
}

.view.on {
  background: #b7b7b7;
}

.view svg {
  fill: none;
  stroke: #222;
  stroke-width: 1.3;
}

.zoom {
  display: flex;
  align-items: center;
  gap: 5px;
  margin-left: 3px;
  font-size: 14px;
}

.zoom input {
  appearance: none;
  width: 94px;
  height: 12px;
  background: linear-gradient(#333, #333) center / 100% 1px no-repeat;
}

.zoom input::-webkit-slider-thumb {
  appearance: none;
  width: 5px;
  height: 12px;
  background: #222;
}

.percent {
  margin-left: 10px;
}

/* taskbar */
.taskbar {
  flex: none;
  height: 45px;
  display: grid;
  grid-template-columns: 1fr auto 1fr;
  align-items: center;
  background: #99cbdb;
}

.weather {
  display: flex;
  align-items: center;
  gap: 2px;
  padding-left: 20px;
  font-size: 11px;
  line-height: 15px;
  text-align: left;
}

.weather b {
  font-weight: 600;
}

.task-center {
  display: flex;
  align-items: center;
}

.task {
  position: relative;
  width: 41px;
  height: 45px;
  display: flex;
  align-items: center;
  justify-content: center;
}

.task.open::after {
  content: "";
  position: absolute;
  bottom: 4px;
  width: 6px;
  height: 3px;
  border-radius: 2px;
  background: #444;
}

.task-search {
  width: 205px;
  height: 30px;
  display: flex;
  align-items: center;
  gap: 8px;
  padding: 0 3px 0 8px;
  margin: 0 3px;
  background: #d9feff;
  border-radius: 15px;
  border-bottom: 1px solid #7fa9c0;
}

.task-search input {
  flex: 1;
  min-width: 0;
}

.task-search input::placeholder {
  color: #333;
}

.tray {
  justify-self: end;
  display: flex;
  align-items: center;
  gap: 8px;
  padding-right: 18px;
}

.tray svg {
  fill: none;
  stroke: #222;
  stroke-width: 1.4;
}

.tray .net {
  margin-left: 10px;
}

.clock {
  width: 60px;
  font-size: 11px;
  line-height: 15px;
  text-align: right;
}
```
FILE: script.js
```js
const columns = "ABCDEFGHIJKLMNOPQRS".split("");
const widths = { A: 17, B: 169, C: 159, D: 139, E: 97 };
const months = columns.slice(5); // F..S

const dash = () => months.slice(0, -1).map(() => "-");
const money = (list) => list.map((n) => "($" + n + ")");

const tier1 = ["3,522,278", "3,536,628", "3,551,037", "3,565,504", "3,580,031", "3,594,616", "3,609,261", "3,623,966",
  "3,638,730", "3,653,555", "3,668,440", "3,683,386", "3,698,392", "3,713,460", "3,728,590"];
const pref1 = ["14,350", "14,409", "14,467", "14,526", "14,585", "14,645", "14,705", "14,764",
  "14,825", "14,885", "14,946", "15,007", "15,068", "15,130"];
const tier2 = ["3,522,278", "3,563,541", "3,605,288", "3,647,524", "3,690,254", "3,733,485", "3,777,223", "3,821,472",
  "3,866,241", "3,911,533", "3,957,357", "4,003,717", "4,050,620", "4,098,073", "4,146,082"];
const pref2 = ["41,263", "41,747", "42,236", "42,730", "43,231", "43,737", "44,250", "44,768",
  "45,293", "45,823", "46,360", "46,903", "47,453", "48,009"];
const dates = ["Jan-25", "Feb-25", "Mar-25", "Apr-25", "May-25", "Jun-25", "Jul-25", "Aug-25",
  "Sep-25", "Oct-25", "Nov-25", "Dec-25", "Jan-26"];

// cls: row classes, m: values for F onward, x: extra classes per cell
const rows = {
  1: { cls: "short index", E: "0", m: dates.map((d, i) => (i < 12 ? "1" : "2")) },
  2: { cls: "banner", B: "Waterfall Distribution with IRR Hurdles" },
  3: { cls: "short" },
  4: { cls: "bold", B: "IRR Hurdles", D: "Hurdle", E: "LP", F: "GP", H: "Initial Equity Contributions", x: { H: "label" } },
  5: { B: "Tier 1", D: "5.0%", E: "90.0%", F: "10.0%", H: "LP", I: "GP",
    x: { B: "edge bt", C: "dr bt", D: "db bt flag", E: "db dr bt flag", F: "db br bt", H: "edge bt db dr mid b", I: "bt br db mid b" } },
  6: { B: "Tier 2", D: "15.0%", E: "80.0%", F: "20.0%", H: "90.0%", I: "10.0%",
    x: { B: "edge", C: "dr", D: "db flag", E: "db dr flag", F: "db br", H: "edge bb dr mid flag", I: "bb br mid" } },
  7: { B: "Tier 3", D: "20.0%", E: "70.0%", F: "30.0%", x: { B: "edge", C: "dr", D: "db flag", E: "db dr flag", F: "db br" } },
  8: { B: "Thereafter", E: "60.0%", F: "40.0%", x: { B: "edge bb", C: "dr bb", D: "bb", E: "bb dr flag", F: "bb br" } },
  9: { cls: "short small-text", m: dates },
  10: { cls: "tall small-text bold line2", D: "Total", E: "Month 0", m: dates.map((d, i) => "Month " + (i + 1)), x: { D: "mid" } },
  11: { cls: "short", box: 1, rule: 1, B: "Contributions", D: "($3,913,643)", E: "($3,913,643)", m: dash() },
  12: { cls: "line1", box: 1, rule: 1, B: "Distributions", D: "$117,464,613", E: "-", m: dash() },
  13: { cls: "dark bold frozen", box: 1, B: "Total Cash Flows", D: "$113,550,971", E: "($3,913,643)", m: dash() },
  14: { cls: "short line2", box: 1 },
  15: { cls: "gray bold", box: 1, B: "Tier 1 Distributions" },
  16: { box: 1, rule: 1, B: "Limited Partner", x: { B: "b i" } },
  17: { cls: "short", box: 1, rule: 1, B: "Beginning Balance", m: money(tier1) },
  18: { box: 1, rule: 1, B: "Add: Contributions", C: "90.0%", D: "($3,522,278)", E: "($3,522,278)", m: dash() },
  19: { cls: "short", box: 1, rule: 1, B: "Preferred Return Due (monthly)", C: "0.41%", D: "($474,402)", E: "-", m: money(pref1) },
  20: { box: 1, rule: 1, B: "Tier 1 Distributions", C: "90.0%", D: "$3,996,680", E: "-", m: dash() },
  21: { cls: "short line1", box: 1, rule: 1 },
  22: { cls: "light line2", box: 1, rule: 1, B: "Ending Balance", D: "-", E: "($3,522,278)", m: money(tier1.slice(1)) },
  23: { cls: "short", box: 1, rule: 1 },
  24: { box: 1, rule: 1, B: "Check", C: "5.0%", D: "$474,402", E: "($3,522,278)", m: dash(), x: { B: "i", C: "i", E: "i", m: "i" } },
  25: { cls: "short", box: 1, rule: 1 },
  26: { box: 1, rule: 1, B: "General Partner", x: { B: "b i" } },
  27: { cls: "short", box: 1, rule: 1, B: "Contributions", C: "10.0%", D: "($391,364)", E: "($391,364)", m: dash() },
  28: { cls: "line2", box: 1, rule: 1, B: "Tier 1 Distributions", C: "10.0%", D: "$444,076", E: "-", m: dash() },
  29: { cls: "line1" },
  30: { cls: "line3", box: 1, rule: 1, B: "Cash Flows for Tier 2", D: "$113,023,858", E: "($0)", m: dash(), x: { E: "i", m: "i" } },
  31: { cls: "line2" },
  32: { cls: "gray bold", box: 1, B: "Tier 2 Distributions" },
  33: { box: 1, rule: 1, B: "Limited Partner", x: { B: "b i" } },
  34: { cls: "short", box: 1, rule: 1, B: "Beginning Balance", m: money(tier2) },
  35: { cls: "short", box: 1, rule: 1, B: "Add: Contributions", C: "90%", D: "($3,522,278)", E: "($3,522,278)", m: dash() },
  36: { box: 1, rule: 1, B: "Preferred Return Due", C: "1.17%", D: "($1,610,944)", E: "-", m: money(pref2) },
  37: { cls: "short", box: 1, rule: 1, B: "Tier 1 Distributions", D: "$3,996,680", E: "-", m: dash() },
  38: { box: 1, rule: 1, B: "Tier 2 Distributions", C: "80%", D: "$1,136,542", E: "($0)", m: dash() },
  39: { cls: "short line1", box: 1, rule: 1 },
  40: { cls: "light line2", box: 1, rule: 1, B: "Ending Balance", D: "-", E: "($3,522,278)", m: money(tier2.slice(1)) },
  41: { cls: "tall", box: 1, rule: 1 },
  42: { cls: "short", box: 1, rule: 1, B: "Check", C: "15.0%", D: "$1,610,944", E: "($3,522,278)", m: dash(), x: { B: "i", C: "i" } },
  43: { box: 1, rule: 1 },
  44: { cls: "short", box: 1, rule: 1, B: "General Partner", x: { B: "b i" } },
  45: { cls: "line2", box: 1, rule: 1, B: "Tier 2 Distributions", C: "20%", D: "$284,136", E: "($0)", m: dash() },
  46: {},
};

function cell(row, num, col) {
  const i = months.indexOf(col);
  const text = row[col] || (row.m && i >= 0 && row.m[i]) || "";
  const extra = (row.x && (row.x[col] || (i >= 0 && row.x.m))) || "";
  const cls = [extra];
  if (col !== "A") cls.push("band");
  if (col === "B") cls.push("label");
  if (col === "B" && row.box) cls.push("edge");
  if (col === "C") cls.push("col-c");
  if (col === "C" && row.rule) cls.push("rule");
  if (col === "D") cls.push("total");
  if (col === "D" && num > 10) cls.push("b");
  if (col === "E") cls.push("freeze");
  if (num > 10 && (text === "-" || text[0] === "$")) cls.push("pos");
  return `<td class="${cls.join(" ").trim()}">${text}</td>`;
}

let html = '<colgroup><col style="width:25px">';
columns.forEach((c) => {
  html += `<col style="width:${widths[c] || 96}px">`;
});
html += '</colgroup><thead><tr class="tall"><th class="corner"></th>';
columns.forEach((c) => {
  html += `<th class="${c === "E" ? "freeze" : ""}">${c}</th>`;
});
html += "</tr></thead><tbody>";
Object.keys(rows).forEach((n) => {
  const row = rows[n];
  html += `<tr class="${row.cls || ""}"><th>${n}</th>${columns.map((c) => cell(row, Number(n), c)).join("")}</tr>`;
});
document.getElementById("grid-table").innerHTML = html + "</tbody>";
```
